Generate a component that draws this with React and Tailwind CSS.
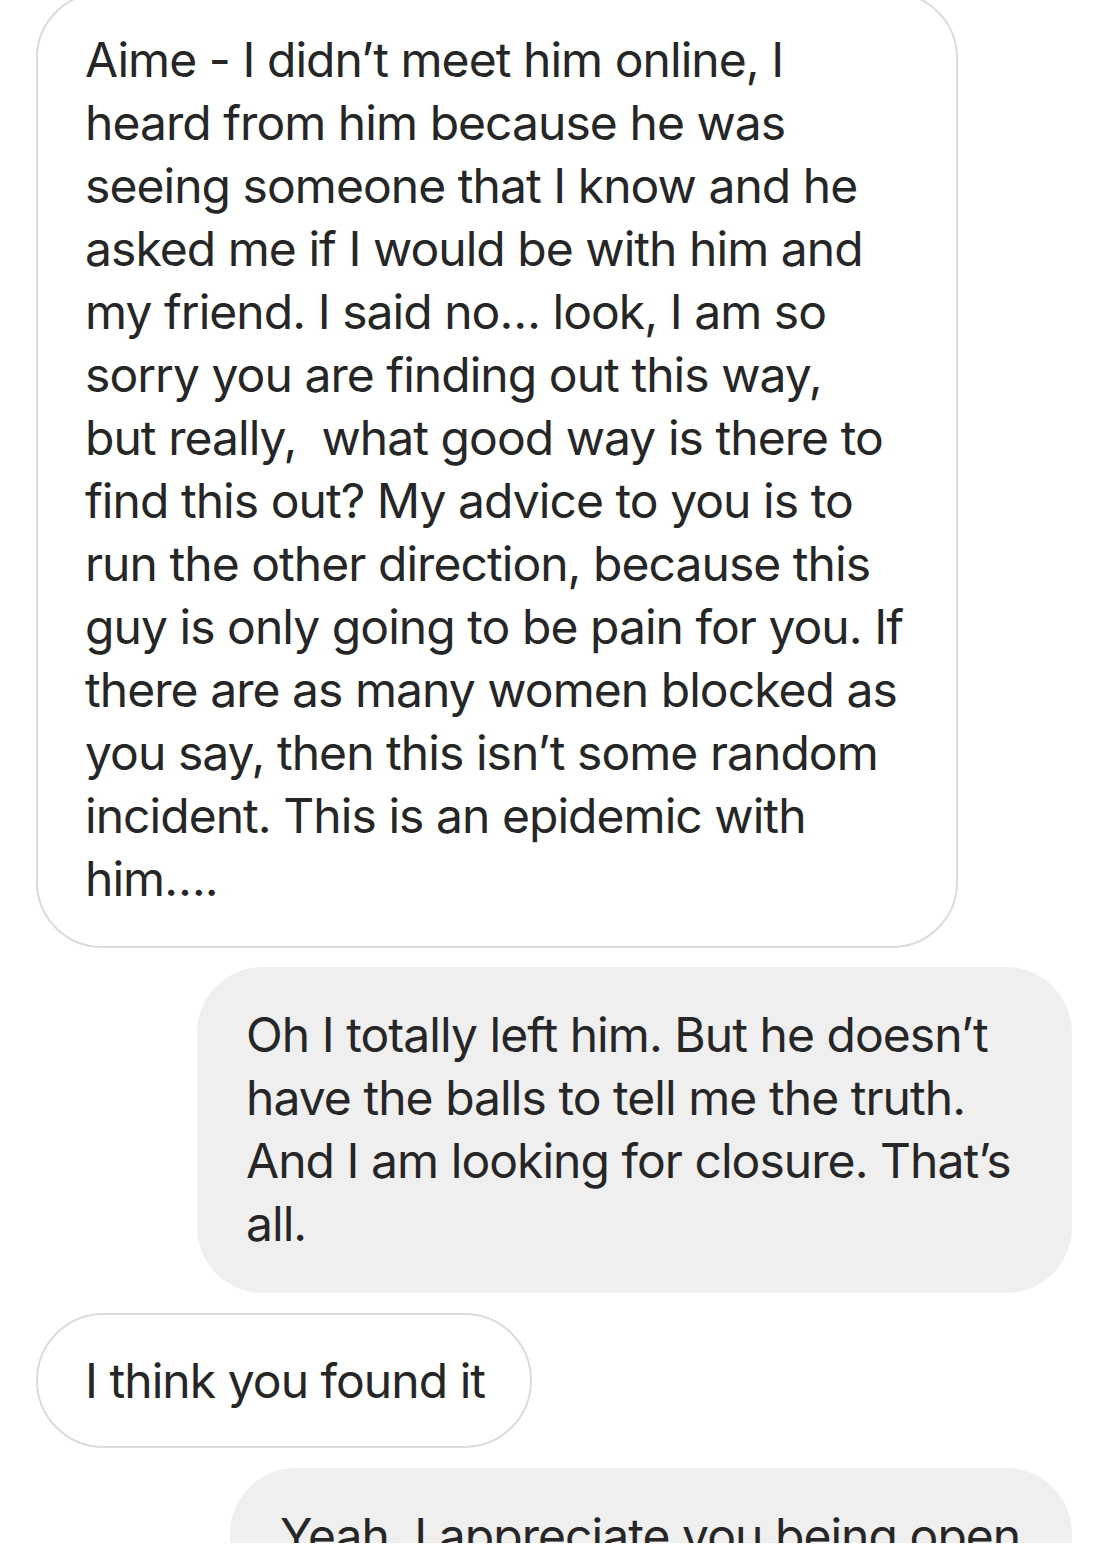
const theirFirst = [
  "Aime - I didn’t meet him online, I",
  "heard from him because he was",
  "seeing someone that I know and he",
  "asked me if I would be with him and",
  "my friend. I said no… look, I am so",
  "sorry you are finding out this way,",
  "but really,  what good way is there to",
  "find this out? My advice to you is to",
  "run the other direction, because this",
  "guy is only going to be pain for you. If",
  "there are as many women blocked as",
  "you say, then this isn’t some random",
  "incident. This is an epidemic with",
  "him….",
];

const mine = [
  "Oh I totally left him. But he doesn’t",
  "have the balls to tell me the truth.",
  "And I am looking for closure. That’s",
  "all.",
];

function Lines({ lines }) {
  return lines.map((line, i) => (
    <div key={i} className="whitespace-pre">
      {line}
    </div>
  ));
}

export default function App() {
  return (
    <div className="w-[1097px] h-[1556px] overflow-hidden bg-white text-[#262626] text-[48px] leading-[63px] tracking-[-0.95px] font-['Inter',sans-serif]">
      <div className="h-[1543px] overflow-hidden flex flex-col">
        {/* incoming long message */}
        <div className="-mt-[8px] ml-[36px] w-[922px] border-2 border-[#dbdbdb] rounded-[66px] pl-[47px] pt-[34px] pb-[36px]">
          <Lines lines={theirFirst} />
        </div>

        {/* my reply */}
        <div className="mt-[19px] ml-auto mr-[25px] w-[875px] bg-[#efefef] rounded-[66px] pl-[49px] pt-[36px] pb-[38px]">
          <Lines lines={mine} />
        </div>

        {/* short incoming */}
        <div className="mt-[20px] ml-[36px] w-[496px] border-2 border-[#dbdbdb] rounded-full pl-[47px] pt-[34px] pb-[34px]">
          <div className="whitespace-pre">I think you found it</div>
        </div>

        {/* cut-off reply */}
        <div className="mt-[20px] ml-auto mr-[25px] w-[842px] shrink-0 bg-[#efefef] rounded-t-[66px] pl-[50px] pt-[36px] pb-[38px]">
          <div className="whitespace-pre">Yeah, I appreciate you being open</div>
        </div>
      </div>
    </div>
  );
}
